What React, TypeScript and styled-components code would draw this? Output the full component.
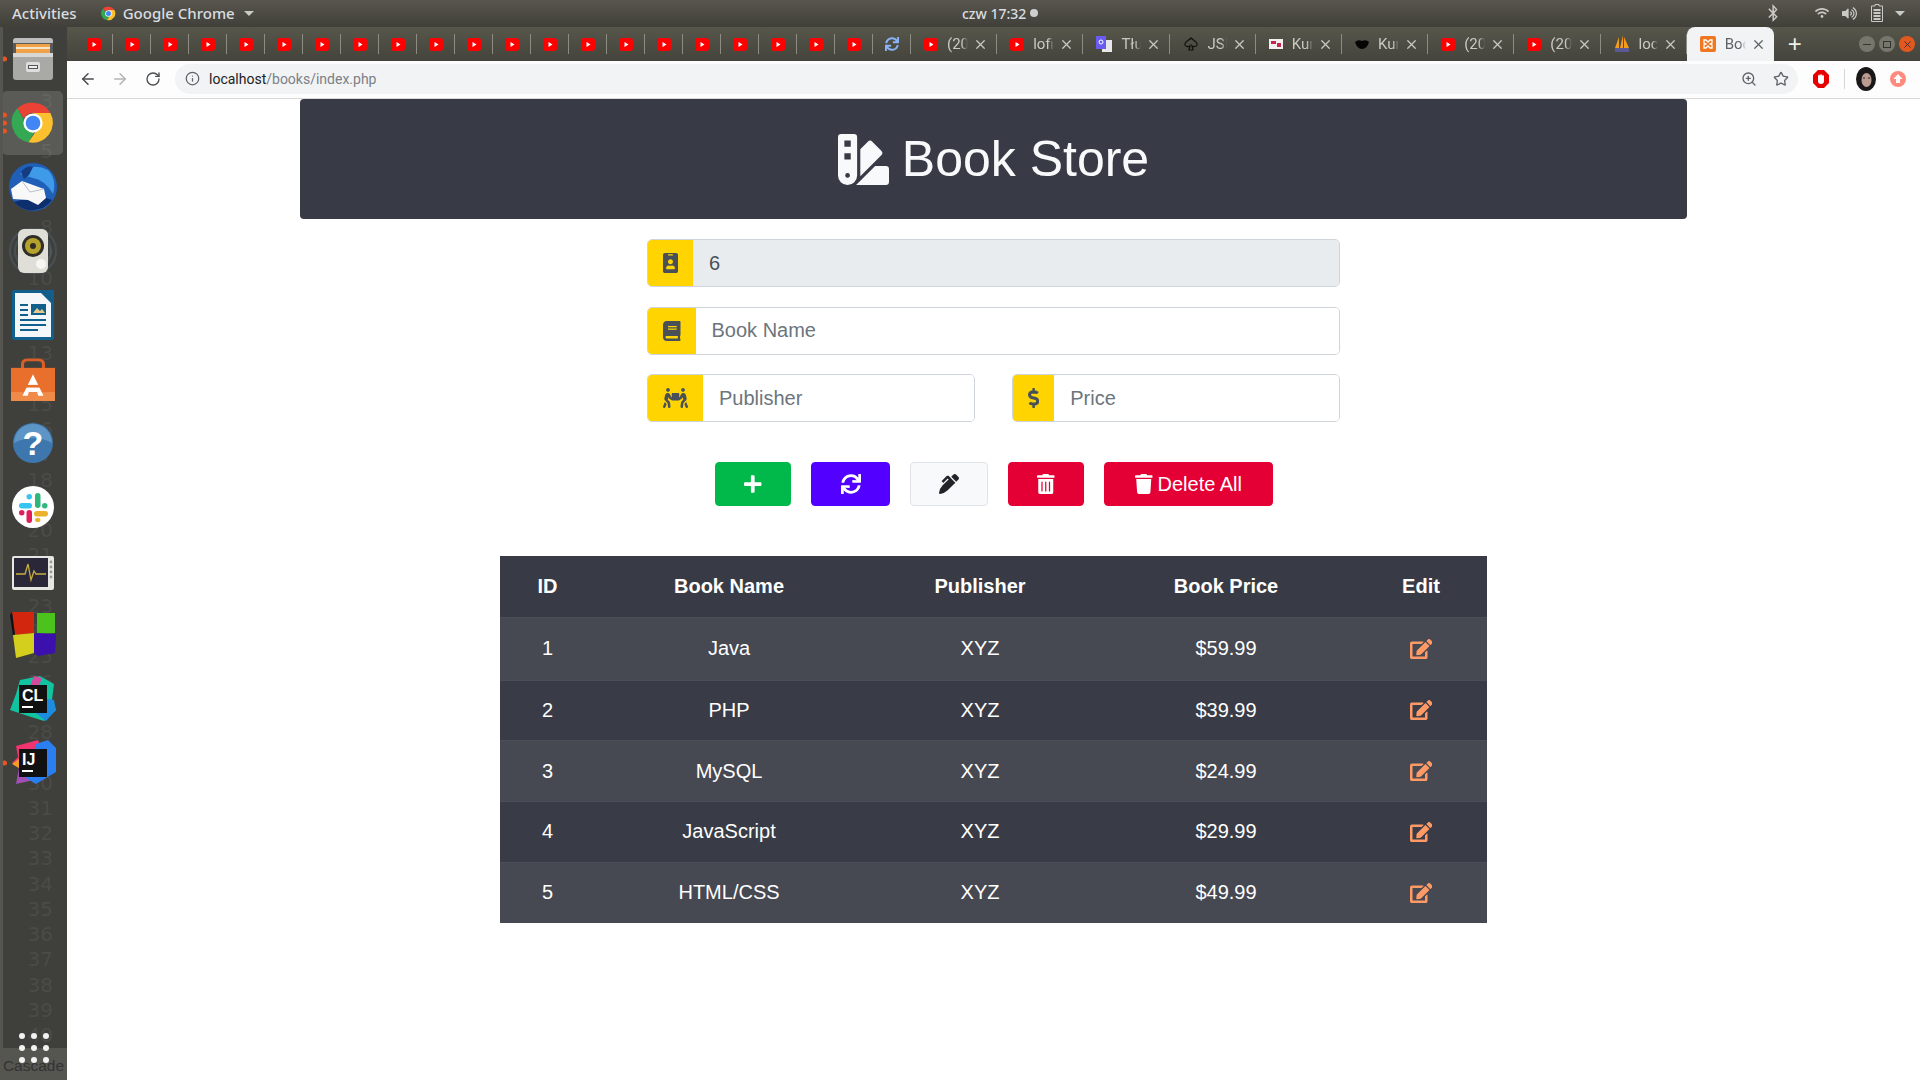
import styled, { createGlobalStyle } from 'styled-components'
import { ArrowLeft, ArrowRight, Info, RotateCw, Star, X, ZoomIn } from 'lucide-react'
import {
  FaBook,
  FaBluetoothB,
  FaDollarSign,
  FaEdit,
  FaIdBadge,
  FaPenAlt,
  FaPeopleCarry,
  FaPlus,
  FaSwatchbook,
  FaSync,
  FaTrash,
  FaTrashAlt,
  FaVolumeUp,
  FaWifi,
} from 'react-icons/fa'

const GlobalStyle = createGlobalStyle`
  html, body {
    margin: 0;
    padding: 0;
    background: #fff;
    font-family: "Liberation Sans", Arial, sans-serif;
    overflow: hidden;
  }
  * { box-sizing: border-box; }
`

const Desktop = styled.div`
  width: 1920px;
  height: 1080px;
  display: grid;
  grid-template-columns: 67px 1fr;
  grid-template-rows: 27px 1fr;
  overflow: hidden;
`

/* ---------- gnome top bar ---------- */
const TopBar = styled.div`
  grid-column: 1 / 3;
  display: grid;
  grid-template-columns: 962px auto 1fr;
  align-items: center;
  padding-bottom: 1px;
  background: linear-gradient(#58564e, #403f39);
  color: #d9dde0;
  font-family: 'Noto Sans', sans-serif;
  font-size: 14px;
  font-weight: 500;
`
const TopLeft = styled.div`
  display: flex;
  align-items: center;
  padding-left: 12px;
  font-size: 15px;
`
const AppMenu = styled.div`
  display: flex;
  align-items: center;
  gap: 7px;
  margin-left: 24px;
`
const Caret = styled.span`
  width: 0;
  height: 0;
  margin-left: 2px;
  border-left: 5px solid transparent;
  border-right: 5px solid transparent;
  border-top: 5px solid #c9cbc9;
`
const Clock = styled.div`
  display: flex;
  align-items: center;
  gap: 4px;
`
const RecDot = styled.span`
  width: 8px;
  height: 8px;
  border-radius: 50%;
  background: #cfcfcf;
`
const TopRight = styled.div`
  display: flex;
  align-items: center;
  justify-content: flex-end;
  padding-right: 15px;
  color: #c9c9c5;
`
const TrayItem = styled.span<{ $gap: number }>`
  display: flex;
  margin-right: ${(p) => p.$gap}px;
`

/* ---------- dock ---------- */
const Dock = styled.div`
  position: relative;
  display: flex;
  flex-direction: column;
  background: #3f3f3b;
  border-left: 3px solid #56554f;
  overflow: hidden;
`
const LineNumbers = styled.div`
  position: absolute;
  top: -14px;
  right: 14px;
  font-family: 'DejaVu Sans', sans-serif;
  font-size: 20px;
  line-height: 25.25px;
  color: #4b4b47;
  text-align: right;
`
const DockItem = styled.div<{ $active?: boolean }>`
  position: relative;
  flex: none;
  height: 64px;
  margin-left: -1px;
  width: 61px;
  display: flex;
  align-items: center;
  justify-content: center;
  border-radius: 5px;
  background: ${(p) => (p.$active ? 'rgba(255,255,255,0.14)' : 'transparent')};
`
const DockDots = styled.div`
  position: absolute;
  left: 0;
  top: 50%;
  transform: translateY(-50%);
  display: grid;
  gap: 3px;
`
const DockDot = styled.span`
  width: 5px;
  height: 5px;
  border-radius: 50%;
  background: #e95420;
`
const DockList = styled.div`
  position: relative;
  display: flex;
  flex-direction: column;
`
const AppsButton = styled.div`
  position: absolute;
  left: 16px;
  bottom: 17px;
  display: grid;
  grid-template-columns: repeat(3, 6px);
  gap: 6px;
`
const AppsDot = styled.span`
  width: 6px;
  height: 6px;
  border-radius: 50%;
  background: #f2f2f2;
`
const CascadeLabel = styled.div`
  position: absolute;
  left: -3px;
  right: 0;
  bottom: 0;
  height: 32px;
  padding-top: 9px;
  background: #565650;
  font-size: 15.5px;
  color: #333335;
  text-align: center;
  white-space: nowrap;
  overflow: hidden;
`

/* ---------- chrome ---------- */
const Window = styled.div`
  display: flex;
  flex-direction: column;
  min-width: 0;
`
const TabStrip = styled.div`
  height: 34px;
  flex: none;
  display: flex;
  align-items: stretch;
  padding-left: 8px;
  background: linear-gradient(#57564b, #45443c);
`
const Tab = styled.div<{ $wide?: boolean; $active?: boolean }>`
  width: ${(p) => (p.$active ? '87px' : p.$wide ? '86.2px' : '38px')};
  flex: none;
  display: flex;
  align-items: center;
  padding-left: ${(p) => (p.$wide ? '13px' : '12px')};
  padding-right: 8px;
  margin-top: ${(p) => (p.$active ? '0' : '7px')};
  margin-bottom: ${(p) => (p.$active ? '0' : '7px')};
  border-right: ${(p) => (p.$active ? 'none' : '1px solid #8d8c82')};
  border-radius: ${(p) => (p.$active ? '8px 8px 0 0' : '0')};
  background: ${(p) => (p.$active ? '#f1f3f4' : 'transparent')};
  color: ${(p) => (p.$active ? '#5f6368' : '#c9c9c3')};
`
const TabTitle = styled.span`
  flex: 1;
  min-width: 0;
  margin: 0 5px 0 9px;
  font-family: 'Roboto', sans-serif;
  font-size: 15px;
  white-space: nowrap;
  overflow: hidden;
  -webkit-mask-image: linear-gradient(90deg, #000 70%, transparent);
  mask-image: linear-gradient(90deg, #000 70%, transparent);
`
const TabClose = styled(X)`
  flex: none;
  width: 15px;
  height: 15px;
  stroke-width: 2;
`
const NewTab = styled.div`
  display: flex;
  align-items: center;
  margin-left: 14px;
  color: #f0f0ea;
  font-family: 'Liberation Sans', sans-serif;
  font-size: 24px;
  font-weight: 400;
`
const WindowButtons = styled.div`
  display: flex;
  align-items: center;
  gap: 4px;
  margin-left: auto;
  padding-right: 5px;
`
const WindowButton = styled.div<{ $close?: boolean }>`
  width: 16px;
  height: 16px;
  display: flex;
  align-items: center;
  justify-content: center;
  border-radius: 50%;
  background: ${(p) => (p.$close ? '#e2591f' : '#77766c')};
  color: ${(p) => (p.$close ? '#3c2c22' : '#35352f')};
`
const MinLine = styled.span`
  width: 8px;
  height: 1px;
  background: currentColor;
`
const MaxBox = styled.span`
  width: 8px;
  height: 7px;
  border: 1px solid currentColor;
`
const Toolbar = styled.div`
  height: 38px;
  flex: none;
  display: flex;
  align-items: center;
  padding-bottom: 2px;
  background: #fdfdfd;
  border-bottom: 1px solid #dad9d7;
`
const NavButton = styled.span<{ $dim?: boolean; $w: number }>`
  display: flex;
  justify-content: center;
  width: ${(p) => p.$w}px;
  color: ${(p) => (p.$dim ? '#b1b3b5' : '#4a4c4f')};
`
const Omnibox = styled.div`
  flex: none;
  width: 1623px;
  height: 30px;
  display: flex;
  align-items: center;
  padding: 0 9px 0 10px;
  border-radius: 15px;
  background: #f1f3f4;
  color: #5f6368;
`
const UrlText = styled.span`
  margin-left: 9px;
  font-family: 'Roboto', sans-serif;
  font-size: 14px;
  color: #7b8087;
`
const UrlHost = styled.span`
  color: #202124;
`
const OmniRight = styled.div`
  margin-left: auto;
  display: flex;
  align-items: center;
  gap: 16px;
`
const ToolDivider = styled.span`
  width: 1px;
  height: 20px;
  margin-right: 11px;
  background: #d3d4d5;
`
const Avatar = styled.span`
  display: flex;
  margin-right: 14px;
`

/* ---------- page ---------- */
const Page = styled.main`
  flex: 1;
  display: flex;
  flex-direction: column;
  align-items: center;
  background: #fff;
`
const Header = styled.header`
  width: 1387px;
  height: 120px;
  flex: none;
  display: flex;
  align-items: center;
  justify-content: center;
  gap: 13px;
  border-radius: 4px;
  background: #383b45;
  color: #f8f9fa;
`
const Title = styled.h1`
  margin: 0;
  font-size: 50px;
  font-weight: 400;
  line-height: 1.2;
`
const BookForm = styled.form`
  width: 693px;
  margin-top: 20px;
  display: grid;
  grid-template-columns: 1fr 1fr;
  column-gap: 37px;
  row-gap: 19.5px;
`
const InputGroup = styled.div<{ $full?: boolean }>`
  grid-column: ${(p) => (p.$full ? '1 / 3' : 'auto')};
  height: 48px;
  display: flex;
  border: 1px solid #ced4da;
  border-radius: 5px;
  overflow: hidden;
`
const Prepend = styled.span<{ $iconW: number }>`
  flex: none;
  display: flex;
  align-items: center;
  padding: 0 15px;
  color: #495057;
  background: #ffd400;
  svg {
    width: ${(p) => p.$iconW}px;
    height: 20px;
  }
`
const TextInput = styled.input`
  flex: 1;
  min-width: 0;
  padding: 0 16px;
  border: none;
  outline: none;
  font-family: inherit;
  font-size: 20px;
  color: #495057;
  background: #fff;
  &:disabled {
    background: #e9ecef;
    opacity: 1;
    -webkit-text-fill-color: #495057;
  }
  &::placeholder {
    color: #6c757d;
    opacity: 1;
  }
`
const ButtonRow = styled.div`
  margin-top: 40px;
  display: flex;
  gap: 20px;
  margin-left: 1px;
`
const buttonColors = {
  green: 'background: #00b94a; color: #fff; border-color: #00b94a;',
  purple: 'background: #5200ff; color: #fff; border-color: #5200ff;',
  light: 'background: #f8f9fa; color: #212529; border-color: #dfe2e7;',
  red: 'background: #e40035; color: #fff; border-color: #e40035;',
}
const ActionButton = styled.button<{ $tone: keyof typeof buttonColors; $w: number; $iconW: number }>`
  width: ${(p) => p.$w}px;
  height: 44px;
  display: flex;
  align-items: center;
  justify-content: center;
  gap: 5px;
  padding: 0;
  border: 1px solid;
  border-radius: 4px;
  font-family: inherit;
  font-size: 20px;
  ${(p) => buttonColors[p.$tone]}
  svg {
    width: ${(p) => p.$iconW}px;
    height: 20px;
  }
`
const BooksTable = styled.table`
  width: 987px;
  margin-top: 50px;
  border-collapse: collapse;
  table-layout: fixed;
  font-size: 20px;
  color: #fff;
  background: #383b45;
`
const HeadRow = styled.tr`
  height: 61px;
`
const HeadCell = styled.th`
  padding: 1px 0 0;
  font-weight: 700;
  text-align: center;
`
const BookRow = styled.tr<{ $odd: boolean; $first: boolean }>`
  height: ${(p) => (p.$first ? '63px' : '60.75px')};
  background: ${(p) => (p.$odd ? '#464852' : '#393c46')};
  border-top: 1px solid #4b4d57;
`
const Cell = styled.td`
  padding: 0;
  text-align: center;
`
const EditIcon = styled(FaEdit)`
  display: block;
  margin: 0 auto;
  width: 22.5px;
  height: 20px;
  color: #ff9a66;
`

/* ---------- drawn logos ---------- */
const YouTubeIcon = () => (
  <svg width="14" height="13" viewBox="0 0 14 13" style={{ flex: 'none' }}>
    <rect width="14" height="13" rx="3" fill="#f00" />
    <path d="M5.5 4l4 2.5-4 2.5z" fill="#fff" />
  </svg>
)
const ChromeIcon = ({ size = 44 }: { size?: number }) => (
  <svg width={size} height={size} viewBox="0 0 48 48">
    <path d="M24 2a22 22 0 0 1 19 11H24a11 11 0 0 0-10 6L7 8a22 22 0 0 1 17-6z" fill="#ea4335" />
    <path d="M7 8l10 18a9 9 0 0 0 9 7l-7 12A22 22 0 0 1 7 8z" fill="#34a853" />
    <path d="M43 13a22 22 0 0 1-24 32l9-13a10 10 0 0 0 4-13l-8-6z" fill="#fbc02d" />
    <circle cx="24" cy="24" r="10.5" fill="#fff" />
    <circle cx="24" cy="24" r="8" fill="#4285f4" />
  </svg>
)
const FilesIcon = () => (
  <svg width="46" height="46" viewBox="0 0 46 46">
    <path d="M3 5q0-3 3-3h34q3 0 3 3v16H3z" fill="#5b5b5b" />
    <path d="M3 5q0-3 3-3h34q3 0 3 3v2H3z" fill="#bdbdbd" />
    <rect x="6" y="8" width="34" height="10" fill="#f0a24a" />
    <rect x="6" y="11" width="34" height="2" fill="#f7e6c8" />
    <rect x="3" y="17" width="40" height="27" rx="3" fill="#a9a9a6" />
    <rect x="3" y="17" width="40" height="4" fill="#d7d7d4" />
    <rect x="16" y="26" width="14" height="10" rx="2" fill="#dedede" />
    <rect x="18" y="29" width="10" height="4" fill="#555" />
    <rect x="19" y="30" width="8" height="2" fill="#eee" />
  </svg>
)
const ThunderbirdIcon = () => (
  <svg width="50" height="50" viewBox="0 0 50 50">
    <circle cx="25" cy="25" r="24" fill="#1f5fb8" />
    <path d="M6 40a24 24 0 0 0 38-2L30 33z" fill="#0d2f6e" />
    <path d="M12 12q12-12 28-4 9 9 5 24-8-14-20-16z" fill="#3f9ae8" />
    <path d="M13 10q6-7 12-5l-4 8-5 4z" fill="#153c80" />
    <path d="M3 27l11-8 22 8 2 9-8 7-10-5-15-1z" fill="#f8f8f8" />
    <path d="M14 19l8 11 14-3" fill="none" stroke="#b9c2cc" strokeWidth="1" />
  </svg>
)
const SpeakerIcon = () => (
  <svg width="50" height="46" viewBox="0 0 50 46">
    <circle cx="25" cy="23" r="23" fill="none" stroke="#546b80" strokeWidth="2" opacity=".4" />
    <circle cx="25" cy="23" r="18" fill="none" stroke="#546b80" strokeWidth="2" opacity=".4" />
    <rect x="10" y="1" width="30" height="44" rx="6" fill="#dfdfd8" />
    <circle cx="25" cy="18" r="11" fill="#2f2d25" />
    <circle cx="25" cy="18" r="8" fill="#b4a22c" />
    <circle cx="25" cy="18" r="3" fill="#2f2d25" />
    <circle cx="33" cy="36" r="5" fill="#f6f6f2" />
  </svg>
)
const WriterIcon = () => (
  <svg width="42" height="50" viewBox="0 0 42 50">
    <path d="M0 2q0-2 2-2h28l12 12v36q0 2-2 2H2q-2 0-2-2z" fill="#115f8c" />
    <path d="M3 3h26l10 10v34H3z" fill="#f4f7f9" />
    <path d="M30 0h12v12z" fill="#115f8c" />
    <path d="M8 14h8v2H8zm0 5h8v2H8zm0 5h8v2H8zm0 5h26v2H8zm0 5h26v2H8zm0 5h18v2H8z" fill="#115f8c" />
    <rect x="19" y="14" width="15" height="11" fill="#115f8c" />
    <path d="M21 23l4-5 3 3 2-2 3 4z" fill="#e6c988" />
  </svg>
)
const StoreIcon = () => (
  <svg width="44" height="43" viewBox="0 0 42 48" preserveAspectRatio="none">
    <path d="M11 14V7q0-5 5-5h10q5 0 5 5v7" fill="none" stroke="#d85f26" strokeWidth="3" />
    <rect y="11" width="42" height="37" fill="#e8702c" />
    <rect y="38" width="42" height="10" fill="#f08a48" />
    <path d="M21 18l10 24h-5l-1-4h-8l-1 4h-5z" fill="#fff" />
    <rect x="8" y="30" width="26" height="3" fill="#e8702c" />
  </svg>
)
const HelpIcon = () => (
  <svg width="42" height="42" viewBox="0 0 42 42">
    <circle cx="21" cy="21" r="20" fill="#3d77ad" />
    <path d="M2 21a19 19 0 0 1 38 0q-18-10-38 0z" fill="#5d95c7" />
    <text x="21" y="33" fontFamily="Liberation Sans" fontSize="34" fontWeight="700" fill="#fff" textAnchor="middle">
      ?
    </text>
  </svg>
)
const SlackIcon = () => (
  <svg width="42" height="42" viewBox="0 0 42 42">
    <circle cx="21" cy="21" r="21" fill="#fff" />
    <rect x="7" y="17" width="13" height="5.5" rx="2.75" fill="#36c5f0" />
    <rect x="14.5" y="8" width="5.5" height="5.5" rx="2.75" fill="#36c5f0" />
    <rect x="23" y="7" width="5.5" height="15" rx="2.75" fill="#2eb67d" />
    <rect x="30" y="17" width="5.5" height="5.5" rx="2.75" fill="#2eb67d" />
    <rect x="22" y="25" width="14" height="5.5" rx="2.75" fill="#ecb22e" />
    <rect x="23" y="32" width="5.5" height="4" rx="2" fill="#ecb22e" />
    <rect x="14.5" y="24" width="5.5" height="13" rx="2.75" fill="#e01e5a" />
    <rect x="7" y="24" width="5.5" height="5.5" rx="2.75" fill="#e01e5a" />
  </svg>
)
const MonitorIcon = () => (
  <svg width="42" height="38" viewBox="0 -4 42 38">
    <rect width="42" height="34" rx="2" fill="#e6e6e2" />
    <rect x="2" y="2" width="34" height="29" fill="#2a2838" />
    <path d="M4 18h9l3-10 3 16 3-9 2 3h10" fill="none" stroke="#c9ad3e" strokeWidth="1.3" />
    <circle cx="39" cy="6" r="1.4" fill="#999" />
    <circle cx="39" cy="11" r="1.4" fill="#999" />
    <circle cx="39" cy="16" r="1.4" fill="#999" />
    <circle cx="39" cy="21" r="1.4" fill="#999" />
  </svg>
)
const CubesIcon = () => (
  <svg width="46" height="48" viewBox="0 0 46 48">
    <path d="M2 1h22v21L5 24z" fill="#d2260e" />
    <path d="M0 4l2-3 3 23-2 1z" fill="#111" />
    <path d="M27 2h18v20l-18 1z" fill="#4cc21c" />
    <path d="M3 24l21-2v20L6 47z" fill="#d4cf1c" />
    <path d="M24 23l4-1 18 1-1 19-17 3-4-3z" fill="#3b10ad" />
  </svg>
)
const JetBrainsIcon = ({ label, variant }: { label: string; variant: 'cl' | 'ij' }) => (
  <svg width="46" height="46" viewBox="0 0 46 46">
    {variant === 'cl' ? (
      <>
        <path d="M10 4l20-4 14 8-2 16 4 10-12 11-16-5-18-6 6-16z" fill="#12c3a0" />
        <path d="M24 0l8 2-4 10-8-2z" fill="#d44a9e" />
        <path d="M32 22l12 2 2 10-10 11-10-8z" fill="#1c8be0" />
      </>
    ) : (
      <>
        <path d="M6 6l22-6 6 12L8 20l2 6-8-3 6-6z" fill="#f0346f" />
        <path d="M2 24l8-6 2 12z" fill="#f59a26" />
        <path d="M6 44l4-22 14 18z" fill="#a24fb4" />
        <path d="M26 4l12-4 10 10-2 22-20 12-10-6z" fill="#2b7ef0" />
      </>
    )}
    <rect x="9" y="9" width="28" height="28" fill="#111" />
    <text x="12" y="25" fontFamily="Liberation Sans" fontSize="16" fontWeight="700" fill="#fff">
      {label}
    </text>
    <rect x="12" y="30" width="11" height="2" fill="#fff" />
  </svg>
)

const TranslateFavicon = () => (
  <svg width="16" height="16" viewBox="0 0 16 16" style={{ flex: 'none' }}>
    <rect x="6" y="4" width="10" height="12" fill="#e8e8e8" />
    <rect width="10" height="13" fill="#6a5cf0" />
    <circle cx="5" cy="6" r="2" fill="none" stroke="#fff" />
  </svg>
)
const SpadeFavicon = () => (
  <svg width="16" height="14" viewBox="0 0 16 14" style={{ flex: 'none' }}>
    <path d="M8 1c3 3 7 4 6 7-1 2-4 2-5 1l1 4H6l1-4c-1 1-4 1-5-1-1-3 3-4 6-7z" fill="none" stroke="#111" strokeWidth="1.2" />
  </svg>
)
const FlagFavicon = () => (
  <svg width="14" height="12" viewBox="0 0 14 12" style={{ flex: 'none' }}>
    <rect y="1" width="14" height="10" fill="#f4f0f0" />
    <path d="M2 3h5v3H2zm6 2h4v4H8z" fill="#c2274c" />
  </svg>
)
const LipsFavicon = () => (
  <svg width="14" height="10" viewBox="0 0 14 10" style={{ flex: 'none' }}>
    <path d="M0 3q3-3 7-1 4-2 7 1-2 7-7 7T0 3z" fill="#050505" />
  </svg>
)
const PmaFavicon = () => (
  <svg width="16" height="18" viewBox="0 0 16 18" style={{ flex: 'none' }}>
    <path d="M1 13L5 2v11zM6 13L9 0v13zM10 13V2l5 11z" fill="#f29d1f" />
    <rect x="1" y="13" width="14" height="4" fill="#5a5a96" />
  </svg>
)
const XamppFavicon = () => (
  <svg width="16" height="16" viewBox="0 0 16 16" style={{ flex: 'none' }}>
    <rect width="16" height="16" rx="2" fill="#f0761f" />
    <path d="M4 4h2l2 2 2-2h2v3l-2 1 2 1v3h-2L8 10l-2 2H4V9l2-1-2-1z" fill="none" stroke="#fff" strokeWidth="1.3" />
  </svg>
)
const AdblockIcon = () => (
  <svg width="16" height="18" viewBox="0 0 16 18">
    <path d="M5 0h6l5 5v8l-5 5H5l-5-5V5z" fill="#e60000" />
    <path d="M5 6q1-3 1.500 0 .5-4 1.500 0 .5-4 1.500 0 .5-2 1.500 0v5q0 3-3 3t-3-3z" fill="#fff" />
  </svg>
)
const ProfilePhoto = () => (
  <svg width="20" height="24" viewBox="0 0 20 24">
    <ellipse cx="10" cy="12" rx="10" ry="12" fill="#1a1718" />
    <ellipse cx="10.500" cy="13" rx="5" ry="7" fill="#b99b90" />
    <path d="M7 11h2m3 0h2" stroke="#222" />
  </svg>
)
const UpdateBadge = () => (
  <svg width="16" height="16" viewBox="0 0 16 16">
    <circle cx="8" cy="8" r="8" fill="#ff8a80" />
    <path d="M8 3l4.500 5H10v4H6V8H3.500z" fill="#fff" />
  </svg>
)
const BatteryIcon = () => (
  <svg width="12" height="18" viewBox="0 0 12 18">
    <path d="M4 .5h4V2h3.500v15.500H.5V2H4z" fill="none" stroke="currentColor" />
    <path d="M2.500 5h7v2h-7zm0 3h7v2h-7zm0 3h7v2h-7zm0 3h7v2h-7z" fill="currentColor" />
  </svg>
)

const lineNumbers = Array.from({ length: 42 }, (_, n) => (n >= 3 && n <= 40 ? String(n) : '\u00a0'))

const dockApps = [
  { icon: <FilesIcon />, dots: 1 },
  { icon: <ChromeIcon />, dots: 3, active: true },
  { icon: <ThunderbirdIcon />, dots: 0 },
  { icon: <SpeakerIcon />, dots: 0 },
  { icon: <WriterIcon />, dots: 0 },
  { icon: <StoreIcon />, dots: 0 },
  { icon: <HelpIcon />, dots: 0 },
  { icon: <SlackIcon />, dots: 0 },
  { icon: <MonitorIcon />, dots: 0 },
  { icon: <CubesIcon />, dots: 0 },
  { icon: <JetBrainsIcon label="CL" variant="cl" />, dots: 0 },
  { icon: <JetBrainsIcon label="IJ" variant="ij" />, dots: 1 },
]

const wideTabs = [
  { icon: <YouTubeIcon />, title: '(20) YouTube' },
  { icon: <YouTubeIcon />, title: 'lofi hip hop' },
  { icon: <TranslateFavicon />, title: 'Tłumacz' },
  { icon: <SpadeFavicon />, title: 'JSKOS' },
  { icon: <FlagFavicon />, title: 'Kurs' },
  { icon: <LipsFavicon />, title: 'Kurs' },
  { icon: <YouTubeIcon />, title: '(20) YouTube' },
  { icon: <YouTubeIcon />, title: '(20) YouTube' },
  { icon: <PmaFavicon />, title: 'localhost' },
]

const books = [
  { id: 1, name: 'Java', publisher: 'XYZ', price: '$59.99' },
  { id: 2, name: 'PHP', publisher: 'XYZ', price: '$39.99' },
  { id: 3, name: 'MySQL', publisher: 'XYZ', price: '$24.99' },
  { id: 4, name: 'JavaScript', publisher: 'XYZ', price: '$29.99' },
  { id: 5, name: 'HTML/CSS', publisher: 'XYZ', price: '$49.99' },
]

const columnWidths = [95, 268, 234, 258, 132]

const App = () => (
  <>
    <GlobalStyle />
    <Desktop>
      <TopBar>
        <TopLeft>
          Activities
          <AppMenu>
            <ChromeIcon size={15} />
            Google Chrome
            <Caret />
          </AppMenu>
        </TopLeft>
        <Clock>
          czw 17:32
          <RecDot />
        </Clock>
        <TopRight>
          <TrayItem $gap={33}>
            <FaBluetoothB size={18} />
          </TrayItem>
          <TrayItem $gap={13}>
            <FaWifi size={14} />
          </TrayItem>
          <TrayItem $gap={14}>
            <FaVolumeUp size={15} />
          </TrayItem>
          <TrayItem $gap={10}>
            <BatteryIcon />
          </TrayItem>
          <Caret />
        </TopRight>
      </TopBar>

      <Dock>
        <LineNumbers>
          {lineNumbers.map((n, i) => (
            <div key={i}>{n}</div>
          ))}
        </LineNumbers>
        <DockList>
          {dockApps.map((app, i) => (
            <DockItem key={i} $active={app.active}>
              {app.icon}
              {app.dots > 0 && (
                <DockDots>
                  {Array.from({ length: app.dots }).map((_, d) => (
                    <DockDot key={d} />
                  ))}
                </DockDots>
              )}
            </DockItem>
          ))}
        </DockList>
        <CascadeLabel>Cascade</CascadeLabel>
        <AppsButton>
          {Array.from({ length: 9 }).map((_, i) => (
            <AppsDot key={i} />
          ))}
        </AppsButton>
      </Dock>

      <Window>
        <TabStrip>
          {Array.from({ length: 21 }).map((_, i) => (
            <Tab key={i}>
              <YouTubeIcon />
            </Tab>
          ))}
          <Tab>
            <FaSync size={14} color="#8ab4f8" style={{ flex: 'none' }} />
          </Tab>
          {wideTabs.map((tab, i) => (
            <Tab key={i} $wide>
              {tab.icon}
              <TabTitle>{tab.title}</TabTitle>
              <TabClose />
            </Tab>
          ))}
          <Tab $wide $active>
            <XamppFavicon />
            <TabTitle>Book Store</TabTitle>
            <TabClose />
          </Tab>
          <NewTab>+</NewTab>
          <WindowButtons>
            <WindowButton>
              <MinLine />
            </WindowButton>
            <WindowButton>
              <MaxBox />
            </WindowButton>
            <WindowButton $close>
              <X size={11} />
            </WindowButton>
          </WindowButtons>
        </TabStrip>

        <Toolbar>
          <NavButton $w={42}>
            <ArrowLeft size={18} />
          </NavButton>
          <NavButton $w={22} $dim>
            <ArrowRight size={18} />
          </NavButton>
          <NavButton $w={44}>
            <RotateCw size={16} />
          </NavButton>
          <Omnibox>
            <Info size={15} />
            <UrlText>
              <UrlHost>localhost</UrlHost>/books/index.php
            </UrlText>
            <OmniRight>
              <ZoomIn size={16} />
              <Star size={16} />
            </OmniRight>
          </Omnibox>
          <NavButton $w={46}>
            <AdblockIcon />
          </NavButton>
          <ToolDivider />
          <Avatar>
            <ProfilePhoto />
          </Avatar>
          <UpdateBadge />
        </Toolbar>

        <Page>
          <Header>
            <FaSwatchbook size={51} />
            <Title>Book Store</Title>
          </Header>

          <BookForm>
            <InputGroup $full>
              <Prepend $iconW={15}>
                <FaIdBadge />
              </Prepend>
              <TextInput value="6" disabled readOnly />
            </InputGroup>
            <InputGroup $full>
              <Prepend $iconW={17.5}>
                <FaBook />
              </Prepend>
              <TextInput placeholder="Book Name" />
            </InputGroup>
            <InputGroup>
              <Prepend $iconW={25}>
                <FaPeopleCarry />
              </Prepend>
              <TextInput placeholder="Publisher" />
            </InputGroup>
            <InputGroup>
              <Prepend $iconW={11.25}>
                <FaDollarSign />
              </Prepend>
              <TextInput placeholder="Price" />
            </InputGroup>
          </BookForm>

          <ButtonRow>
            <ActionButton type="button" $tone="green" $w={76} $iconW={17.5}>
              <FaPlus />
            </ActionButton>
            <ActionButton type="button" $tone="purple" $w={79} $iconW={20}>
              <FaSync />
            </ActionButton>
            <ActionButton type="button" $tone="light" $w={78} $iconW={20}>
              <FaPenAlt />
            </ActionButton>
            <ActionButton type="button" $tone="red" $w={76} $iconW={17.5}>
              <FaTrashAlt />
            </ActionButton>
            <ActionButton type="button" $tone="red" $w={169} $iconW={17.5}>
              <FaTrash />
              Delete All
            </ActionButton>
          </ButtonRow>

          <BooksTable>
            <colgroup>
              {columnWidths.map((w) => (
                <col key={w} width={w} />
              ))}
            </colgroup>
            <thead>
              <HeadRow>
                <HeadCell>ID</HeadCell>
                <HeadCell>Book Name</HeadCell>
                <HeadCell>Publisher</HeadCell>
                <HeadCell>Book Price</HeadCell>
                <HeadCell>Edit</HeadCell>
              </HeadRow>
            </thead>
            <tbody>
              {books.map((book, i) => (
                <BookRow key={book.id} $odd={i % 2 === 0} $first={i === 0}>
                  <Cell>{book.id}</Cell>
                  <Cell>{book.name}</Cell>
                  <Cell>{book.publisher}</Cell>
                  <Cell>{book.price}</Cell>
                  <Cell>
                    <EditIcon />
                  </Cell>
                </BookRow>
              ))}
            </tbody>
          </BooksTable>
        </Page>
      </Window>
    </Desktop>
  </>
)

export default App
